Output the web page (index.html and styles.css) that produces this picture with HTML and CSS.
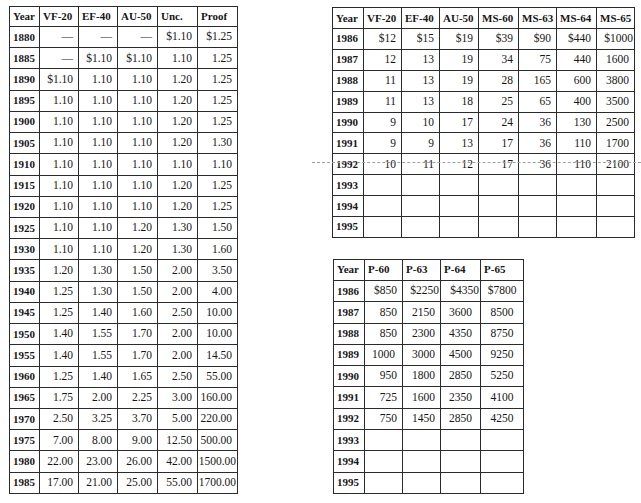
FILE: index.html
```html
<!DOCTYPE html>
<html>
<head>
<meta charset="utf-8">
<link rel="stylesheet" href="styles.css">
</head>
<body>
<div class="page">
  <table class="grid t-left">
    <colgroup><col style="width:30px"><col style="width:39px"><col style="width:39px"><col style="width:40px"><col style="width:40px"><col style="width:40px"></colgroup>
    <thead><tr><th>Year</th><th>VF-20</th><th>EF-40</th><th>AU-50</th><th>Unc.</th><th>Proof</th></tr></thead>
    <tbody>
      <tr><th>1880</th><td>—</td><td>—</td><td>—</td><td>$1.10</td><td>$1.25</td></tr>
      <tr><th>1885</th><td>—</td><td>$1.10</td><td>$1.10</td><td>1.10</td><td>1.25</td></tr>
      <tr><th>1890</th><td>$1.10</td><td>1.10</td><td>1.10</td><td>1.20</td><td>1.25</td></tr>
      <tr><th>1895</th><td>1.10</td><td>1.10</td><td>1.10</td><td>1.20</td><td>1.25</td></tr>
      <tr><th>1900</th><td>1.10</td><td>1.10</td><td>1.10</td><td>1.20</td><td>1.25</td></tr>
      <tr><th>1905</th><td>1.10</td><td>1.10</td><td>1.10</td><td>1.20</td><td>1.30</td></tr>
      <tr><th>1910</th><td>1.10</td><td>1.10</td><td>1.10</td><td>1.10</td><td>1.10</td></tr>
      <tr><th>1915</th><td>1.10</td><td>1.10</td><td>1.10</td><td>1.20</td><td>1.25</td></tr>
      <tr><th>1920</th><td>1.10</td><td>1.10</td><td>1.10</td><td>1.20</td><td>1.25</td></tr>
      <tr><th>1925</th><td>1.10</td><td>1.10</td><td>1.20</td><td>1.30</td><td>1.50</td></tr>
      <tr><th>1930</th><td>1.10</td><td>1.10</td><td>1.20</td><td>1.30</td><td>1.60</td></tr>
      <tr><th>1935</th><td>1.20</td><td>1.30</td><td>1.50</td><td>2.00</td><td>3.50</td></tr>
      <tr><th>1940</th><td>1.25</td><td>1.30</td><td>1.50</td><td>2.00</td><td>4.00</td></tr>
      <tr><th>1945</th><td>1.25</td><td>1.40</td><td>1.60</td><td>2.50</td><td>10.00</td></tr>
      <tr><th>1950</th><td>1.40</td><td>1.55</td><td>1.70</td><td>2.00</td><td>10.00</td></tr>
      <tr><th>1955</th><td>1.40</td><td>1.55</td><td>1.70</td><td>2.00</td><td>14.50</td></tr>
      <tr><th>1960</th><td>1.25</td><td>1.40</td><td>1.65</td><td>2.50</td><td>55.00</td></tr>
      <tr><th>1965</th><td>1.75</td><td>2.00</td><td>2.25</td><td>3.00</td><td>160.00</td></tr>
      <tr><th>1970</th><td>2.50</td><td>3.25</td><td>3.70</td><td>5.00</td><td>220.00</td></tr>
      <tr><th>1975</th><td>7.00</td><td>8.00</td><td>9.00</td><td>12.50</td><td>500.00</td></tr>
      <tr><th>1980</th><td>22.00</td><td>23.00</td><td>26.00</td><td>42.00</td><td class="tight">1500.00</td></tr>
      <tr><th>1985</th><td>17.00</td><td>21.00</td><td>25.00</td><td>55.00</td><td class="tight">1700.00</td></tr>
    </tbody>
  </table>

  <div class="right">
    <table class="grid t-ms">
      <colgroup><col style="width:31px"><col style="width:38px"><col style="width:38px"><col style="width:39px"><col style="width:40px"><col style="width:38px"><col style="width:40px"><col style="width:38px"></colgroup>
      <thead><tr><th>Year</th><th>VF-20</th><th>EF-40</th><th>AU-50</th><th>MS-60</th><th>MS-63</th><th>MS-64</th><th>MS-65</th></tr></thead>
      <tbody>
        <tr><th>1986</th><td>$12</td><td>$15</td><td>$19</td><td>$39</td><td>$90</td><td>$440</td><td class="tight">$1000</td></tr>
        <tr><th>1987</th><td>12</td><td>13</td><td>19</td><td>34</td><td>75</td><td>440</td><td>1600</td></tr>
        <tr><th>1988</th><td>11</td><td>13</td><td>19</td><td>28</td><td>165</td><td>600</td><td>3800</td></tr>
        <tr><th>1989</th><td>11</td><td>13</td><td>18</td><td>25</td><td>65</td><td>400</td><td>3500</td></tr>
        <tr><th>1990</th><td>9</td><td>10</td><td>17</td><td>24</td><td>36</td><td>130</td><td>2500</td></tr>
        <tr><th>1991</th><td>9</td><td>9</td><td>13</td><td>17</td><td>36</td><td>110</td><td>1700</td></tr>
        <tr><th>1992</th><td>10</td><td>11</td><td>12</td><td>17</td><td>36</td><td>110</td><td>2100</td></tr>
        <tr><th>1993</th><td></td><td></td><td></td><td></td><td></td><td></td><td></td></tr>
        <tr><th>1994</th><td></td><td></td><td></td><td></td><td></td><td></td><td></td></tr>
        <tr><th>1995</th><td></td><td></td><td></td><td></td><td></td><td></td><td></td></tr>
      </tbody>
    </table>

    <table class="grid t-proof">
      <colgroup><col style="width:31px"><col style="width:38px"><col style="width:38px"><col style="width:40px"><col style="width:43px"></colgroup>
      <thead><tr><th>Year</th><th>P-60</th><th>P-63</th><th>P-64</th><th>P-65</th></tr></thead>
      <tbody>
        <tr><th>1986</th><td>$850</td><td class="tight">$2250</td><td class="tight">$4350</td><td class="c">$7800</td></tr>
        <tr><th>1987</th><td>850</td><td>2150</td><td class="c">3600</td><td class="c">8500</td></tr>
        <tr><th>1988</th><td>850</td><td>2300</td><td class="c">4350</td><td class="c">8750</td></tr>
        <tr><th>1989</th><td class="c">1000</td><td>3000</td><td class="c">4500</td><td class="c">9250</td></tr>
        <tr><th>1990</th><td>950</td><td>1800</td><td class="c">2850</td><td class="c">5250</td></tr>
        <tr><th>1991</th><td>725</td><td>1600</td><td class="c">2350</td><td class="c">4100</td></tr>
        <tr><th>1992</th><td>750</td><td>1450</td><td class="c">2850</td><td class="c">4250</td></tr>
        <tr><th>1993</th><td></td><td></td><td></td><td></td></tr>
        <tr><th>1994</th><td></td><td></td><td></td><td></td></tr>
        <tr><th>1995</th><td></td><td></td><td></td><td></td></tr>
      </tbody>
    </table>
  </div>

  <div class="fold"></div>
</div>
</body>
</html>
```

FILE: styles.css
```css
html, body {
  margin: 0;
  padding: 0;
  background: #ffffff;
}

.page {
  position: relative;
  width: 641px;
  height: 503px;
  display: flex;
  align-items: flex-start;
  font-family: "Liberation Serif", "Times New Roman", serif;
  color: #161616;
  overflow: hidden;
}

.grid {
  border-collapse: collapse;
  table-layout: fixed;
  font-size: 11.5px;
  line-height: 1;
}

.grid th,
.grid td {
  border: 1px solid #2b2b2b;
  padding: 0;
  white-space: nowrap;
  overflow: hidden;
}

.grid thead th {
  text-align: left;
  font-weight: bold;
  font-size: 11px;
  padding-left: 3px;
}

.grid tbody th {
  text-align: left;
  font-weight: bold;
  font-size: 11px;
  padding-left: 3px;
}

.grid td {
  text-align: right;
  padding-right: 5px;
}

.grid td.tight {
  padding-right: 1px;
}

.grid td.c {
  text-align: center;
  padding-right: 0;
}

.t-left {
  margin: 6px 0 0 9px;
  width: 228px;
}

.t-left thead tr { height: 20px; }
.t-left tbody tr { height: 21.23px; }

.right {
  display: flex;
  flex-direction: column;
  gap: 21px;
  margin: 7px 0 0 94px;
}

.t-ms {
  width: 302px;
}

.t-ms thead tr { height: 21px; }
.t-ms tbody tr { height: 20.9px; }

.t-proof {
  width: 190px;
  margin-left: 1px;
}

.t-proof thead tr { height: 21px; }
.t-proof tbody tr { height: 21.3px; }

.fold {
  position: absolute;
  left: 312px;
  right: 0;
  top: 162px;
  border-top: 1px dashed #a0a0a0;
}
```
